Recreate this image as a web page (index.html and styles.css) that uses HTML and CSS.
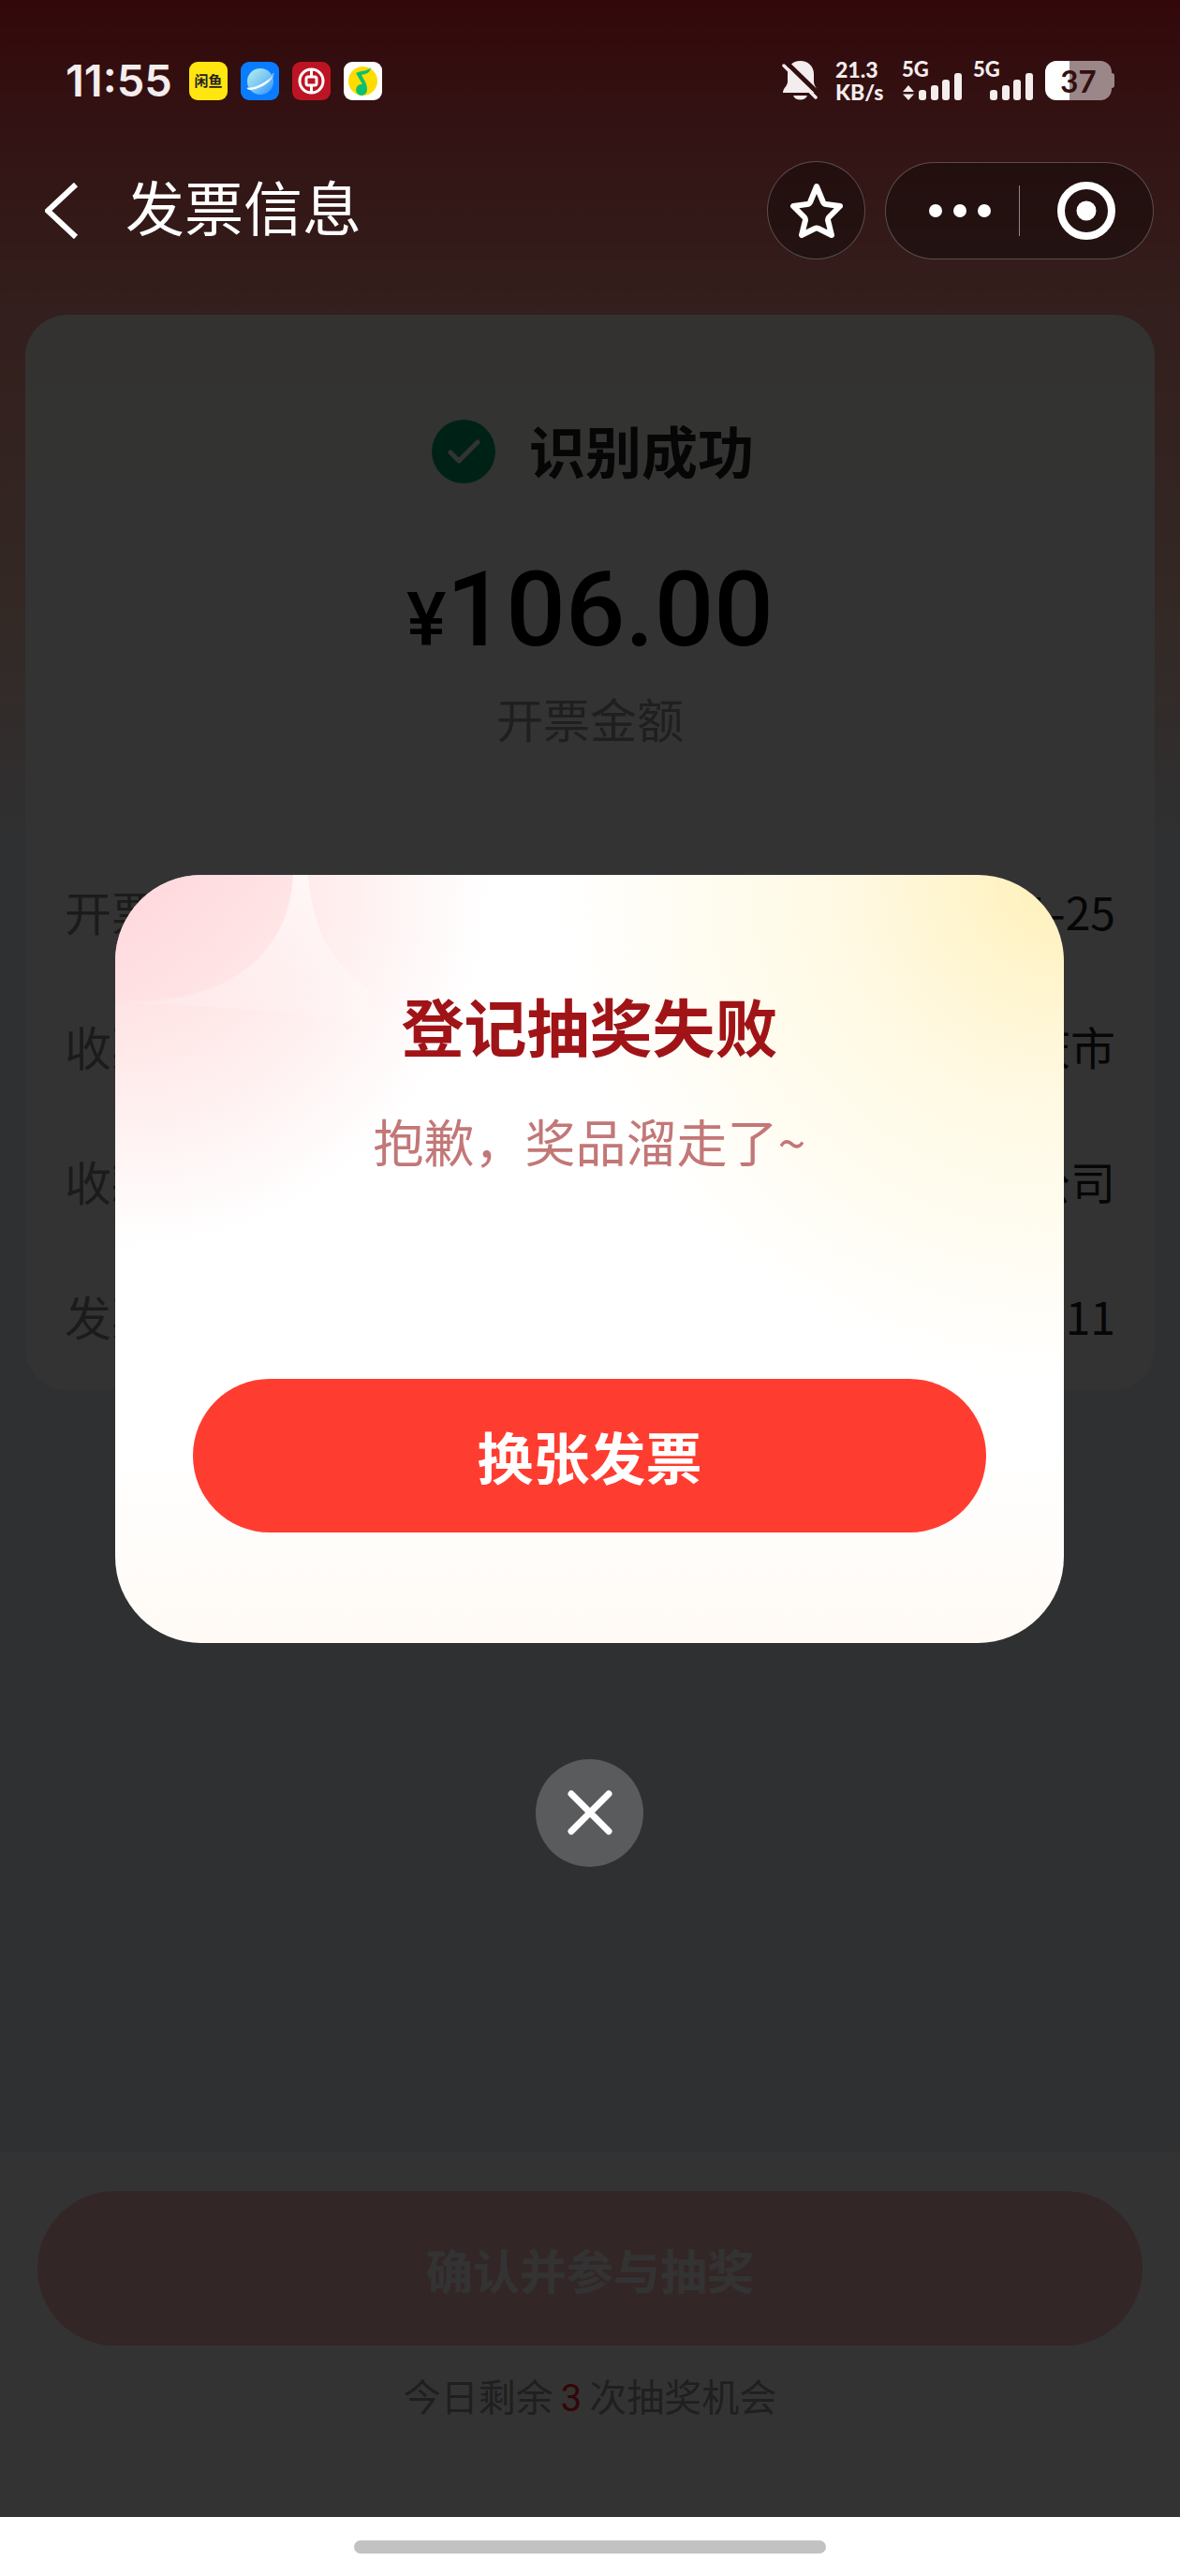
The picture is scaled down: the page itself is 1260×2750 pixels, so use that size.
FILE: index.html
```html
<!DOCTYPE html>
<html lang="zh-CN">
<head>
<meta charset="utf-8">
<meta name="viewport" content="width=device-width">
<title>发票信息</title>
<link rel="stylesheet" href="styles.css">
</head>
<body>
<div class="screen">
  <div class="app">
    <div class="status">
      <div class="status-left">
        <time class="clock">11:55</time>
        <span class="app-icon app-yellow">闲鱼</span>
        <svg class="app-icon" viewBox="0 0 41 41" aria-hidden="true">
          <defs>
            <linearGradient id="planet" x1="0" y1="0" x2="1" y2="1"><stop offset="0" stop-color="#b9f0ea"/><stop offset=".5" stop-color="#7cc8f5"/><stop offset="1" stop-color="#2a8dfb"/></linearGradient>
            <linearGradient id="ring" x1="0" y1="1" x2="1" y2="0"><stop offset="0" stop-color="#fff"/><stop offset=".6" stop-color="#fff"/><stop offset="1" stop-color="#6cb8ff"/></linearGradient>
          </defs>
          <rect width="41" height="41" fill="#0a7cff"/>
          <circle cx="21" cy="21" r="14" fill="url(#planet)"/>
          <path d="M7 28C8 33 35 24 35 12C33 20 14 30 7 28Z" fill="url(#ring)" stroke="url(#ring)"/>
        </svg>
        <svg class="app-icon" viewBox="0 0 41 41" aria-hidden="true">
          <rect width="41" height="41" fill="#bd1424"/>
          <g fill="none" stroke="#fff" stroke-width="3"><circle cx="20.500" cy="20.500" r="12.500"/><path d="M20.500 8v7M20.500 26v7"/><rect x="15" y="16" width="11" height="9" rx="2"/></g>
        </svg>
        <svg class="app-icon" viewBox="0 0 41 41" aria-hidden="true">
          <rect width="41" height="41" fill="#fff"/>
          <circle cx="20.500" cy="20.500" r="15.500" fill="#ffdc00"/>
          <path d="M29 6C26 10 20 9 13 12L20 24A6 6 0 1 0 25 29C25 23 21 18 19 14C24 13 28 12 29 6Z" fill="#0cc06f"/>
        </svg>
      </div>
      <div class="status-right">
        <svg class="bell" viewBox="0 0 39 42" aria-hidden="true">
          <path d="M19.500 0C11 0 6 6 6 14V22C6 27 1 29 1 34H38C38 29 34 27 34 22V14C34 6 28 0 19.500 0Z" fill="#f3eded"/>
          <path d="M12 37H27C25 43 14 43 12 37Z" fill="#f3eded"/>
          <path d="M5 2L40 36" stroke="#330e0f" stroke-width="5"/>
          <path d="M2 5L36 39" stroke="#f3eded" stroke-width="3.500" stroke-linecap="round"/>
        </svg>
        <span class="speed"><span>21.3</span><span>KB/s</span></span>
        <svg class="signal" viewBox="0 0 64 42" aria-hidden="true">
          <text x="-1" y="17">5G</text>
          <path d="M0 33L6 26L12 33ZM0 35.500L6 42L12 35.500Z"/>
          <rect x="17" y="31" width="8" height="11" rx="3"/><rect x="30" y="26" width="8" height="16" rx="3"/><rect x="42" y="20" width="8" height="22" rx="3"/><rect x="55" y="13" width="8" height="29" rx="3"/>
        </svg>
        <svg class="signal" viewBox="0 0 64 42" aria-hidden="true">
          <text x="-1" y="17">5G</text>
          <rect x="17" y="31" width="8" height="11" rx="3"/><rect x="30" y="26" width="8" height="16" rx="3"/><rect x="42" y="20" width="8" height="22" rx="3"/><rect x="55" y="13" width="8" height="29" rx="3"/>
        </svg>
        <span class="battery">37</span>
      </div>
    </div>

    <header class="nav">
      <button class="back" type="button" aria-label="返回">
        <svg viewBox="0 0 36 60"><path d="M33 2L3 30L33 58"/></svg>
      </button>
      <h1 class="nav-title">发票信息</h1>
      <button class="star" type="button" aria-label="收藏">
        <svg viewBox="0 0 60 60"><path d="M30 4L37 21Q38 23 40 23L55 25L43 37Q42 38 42 40L46 56L32 49Q30 48 28 49L14 56L18 40Q18 38 17 37L5 25L20 23Q22 23 23 21Z"/></svg>
      </button>
      <div class="capsule">
        <button type="button" aria-label="更多">
          <svg class="dots" viewBox="0 0 66 14"><circle cx="7" cy="7" r="7"/><circle cx="33" cy="7" r="7"/><circle cx="59" cy="7" r="7"/></svg>
        </button>
        <span class="divider"></span>
        <button type="button" aria-label="关闭">
          <svg class="target" viewBox="0 0 62 62"><circle cx="31" cy="31" r="27"/><circle class="target-dot" cx="31" cy="31" r="10.500"/></svg>
        </button>
      </div>
    </header>

    <main class="card">
      <div class="result">
        <svg class="check" viewBox="0 0 68 68" aria-hidden="true"><circle cx="34" cy="34" r="34"/><path d="M20 35L29 44L49 24"/></svg>
        <h2>识别成功</h2>
      </div>
      <p class="amount"><span class="yen">¥</span>106.00</p>
      <p class="caption">开票金额</p>
      <dl class="rows">
        <div class="row"><dt>开票日期</dt><dd>2025-11-25</dd></div>
        <div class="row"><dt>收票地区</dt><dd>重庆市</dd></div>
        <div class="row"><dt>收款方</dt><dd>有限公司</dd></div>
        <div class="row"><dt>发票号码</dt><dd>2711</dd></div>
      </dl>
    </main>

    <footer class="footer">
      <button class="confirm" type="button" disabled>确认并参与抽奖</button>
      <p class="note">今日剩余<b>3</b>次抽奖机会</p>
    </footer>

    <div class="overlay">
      <section class="dialog" role="dialog" aria-modal="true" aria-labelledby="dialog-title">
        <svg class="sparkle" viewBox="0 0 270 270" aria-hidden="true">
          <defs>
            <linearGradient id="glint" x1="0" y1="0" x2="1" y2="1"><stop offset="0" stop-color="#ffd8dd"/><stop offset="1" stop-color="#ffe6e4" stop-opacity=".2"/></linearGradient>
            <linearGradient id="beam" x1="0" y1="0" x2="0" y2="1"><stop offset="0" stop-color="#fff" stop-opacity=".6"/><stop offset="1" stop-color="#fff" stop-opacity=".1"/></linearGradient>
          </defs>
          <path d="M0 0H190C186 80 130 132 20 134L0 136Z" fill="url(#glint)"/>
          <path d="M190 0H206C212 60 228 90 270 122V160C220 150 120 140 20 137C130 132 186 80 190 0Z" fill="url(#beam)"/>
        </svg>
        <h2 id="dialog-title" class="dialog-title">登记抽奖失败</h2>
        <p class="dialog-text">抱歉，奖品溜走了~</p>
        <button class="primary" type="button">换张发票</button>
      </section>
      <button class="close" type="button" aria-label="关闭弹窗">
        <svg viewBox="0 0 48 48"><path d="M4 4L44 44M44 4L4 44"/></svg>
      </button>
    </div>
  </div>
  <div class="gesture"><span class="gesture-bar"></span></div>
</div>
</body>
</html>
```
FILE: styles.css
```css
* { box-sizing: border-box; }

body,
h1,
h2,
p,
dl,
dd { margin: 0; }

body {
  font-family: "Noto Sans CJK SC", sans-serif;
  background: #fff;
}

button {
  padding: 0;
  border: 0;
  background: none;
  font: inherit;
  color: inherit;
}

svg { display: block; }

.screen {
  display: flex;
  flex-direction: column;
  min-height: 100vh;
}

.app {
  position: relative;
  display: flex;
  flex: 1;
  flex-direction: column;
  background: linear-gradient(#ff2837 0, #ff6464 150px, #ff9b91 336px, #ffc8b4 640px, #ebf0f5 900px);
}

/* System status bar */
.status,
.nav {
  position: relative;
  z-index: 2;
  display: flex;
  align-items: center;
}

.status {
  justify-content: space-between;
  height: 172px;
  padding: 0 70px;
  color: #f3eded;
}

.status-left,
.status-right {
  display: flex;
  align-items: center;
}

.status-left { gap: 14px; }

.clock {
  width: 118px;
  font: 600 47px/48px Inter, sans-serif;
}

.app-icon {
  width: 41px;
  height: 41px;
  border-radius: 9px;
}

.app-yellow {
  background: #ffe60f;
  color: #222;
  font-size: 15px;
  font-weight: 700;
  line-height: 39px;
  text-align: center;
}

.bell {
  width: 39px;
  height: 42px;
  margin-right: 18px;
}

.speed {
  display: flex;
  flex-direction: column;
  width: 52px;
  margin-right: 20px;
  font: 900 23px/24px Lato, sans-serif;
}

.signal {
  width: 64px;
  height: 42px;
  margin-right: 12px;
  overflow: visible;
  fill: #f3eded;
  font: 900 22px Lato, sans-serif;
}

.battery {
  position: relative;
  width: 71px;
  height: 42px;
  margin-right: 3px;
  border-radius: 12px;
  background: linear-gradient(90deg, #fff 26px, #9b8787 26px);
  color: #330f10;
  font: 700 33px/42px Lato, sans-serif;
  text-align: center;
}

.battery::after {
  content: "";
  position: absolute;
  top: 13px;
  left: 71px;
  width: 3px;
  height: 16px;
  border-radius: 0 3px 3px 0;
  background: #9b8787;
}

/* Navigation bar */
.nav {
  height: 105px;
  padding: 0 28px 0 48px;
  color: #fff;
}

.back svg {
  width: 36px;
  height: 60px;
  fill: none;
  stroke: #fff;
  stroke-width: 6;
}

.nav-title {
  flex: 1;
  margin-left: 50px;
  padding-bottom: 12px;
  font-size: 63px;
  font-weight: 400;
  line-height: 90px;
}

.star,
.capsule {
  border: 1px solid rgba(255, 255, 255, .25);
  background: rgba(0, 0, 0, .3);
}

.star {
  display: grid;
  place-items: center;
  width: 105px;
  height: 105px;
  margin-right: 21px;
  border-radius: 50%;
}

.star svg {
  width: 60px;
  height: 60px;
  fill: none;
  stroke: #fff;
  stroke-width: 6;
  stroke-linejoin: round;
}

.capsule {
  display: flex;
  align-items: center;
  width: 287px;
  height: 104px;
  border-radius: 52px;
}

.capsule button {
  display: grid;
  flex: 1;
  place-items: center;
  height: 100%;
}

.divider {
  width: 1px;
  height: 54px;
  background: rgba(255, 255, 255, .5);
}

.dots {
  width: 66px;
  height: 14px;
  margin-left: 16px;
  fill: #fff;
}

.target {
  width: 62px;
  height: 62px;
  fill: none;
  stroke: #fff;
  stroke-width: 8;
}

.target-dot {
  fill: #fff;
  stroke: none;
}

/* Invoice card */
.card {
  margin: 59px 27px 0;
  padding: 112px 42px 8px;
  border-radius: 45px;
  background: linear-gradient(#fffaf0, #fff 240px);
}

.result {
  display: flex;
  align-items: center;
  justify-content: center;
  gap: 36px;
  padding-left: 6px;
}

.result h2 {
  padding-bottom: 4px;
  color: #222;
  font-size: 60px;
  line-height: 64px;
}

.check {
  width: 68px;
  height: 68px;
  fill: #00aa6e;
}

.check path {
  fill: none;
  stroke: #fff;
  stroke-width: 5;
  stroke-linecap: round;
  stroke-linejoin: round;
}

.amount {
  margin-top: 79px;
  color: #000;
  font: 500 112px/112px Roboto, sans-serif;
  text-align: center;
}

.yen {
  font-size: 80px;
}

.caption {
  margin-top: 18px;
  color: #999;
  font-size: 50px;
  line-height: 60px;
  text-align: center;
}

.rows { margin-top: 104px; }

.row {
  display: flex;
  justify-content: space-between;
  font-size: 50px;
  line-height: 144px;
}

.row dt { color: #888; }

.row dd {
  color: #222;
  font-size: 48px;
}

/* Bottom action area */
.footer {
  margin-top: auto;
  padding: 41px 40px 94px;
  background: #fff;
  text-align: center;
}

.confirm {
  width: 100%;
  height: 165px;
  border-radius: 83px;
  background: #ffbec3;
  color: #fff;
  font-size: 50px;
  font-weight: 700;
}

.note {
  margin-top: 21px;
  color: #999;
  font-size: 40px;
  line-height: 64px;
}

.note b {
  margin: 0 8px;
  color: #ff1e28;
  font-family: Roboto, sans-serif;
  font-weight: 400;
}

/* Result dialog */
.overlay {
  position: absolute;
  inset: 0;
  z-index: 1;
  display: grid;
  grid-template-rows: 1fr auto 1fr;
  justify-items: center;
  padding: 0 124px 0 123px;
  background: rgba(0, 0, 0, .8);
}

.dialog {
  position: relative;
  grid-row: 2;
  width: 100%;
  padding: 115px 83px 118px;
  overflow: hidden;
  border-radius: 92px;
  background:
    radial-gradient(circle at 100% 0, #fff0b9 0, #fff9e2 230px, rgba(255, 255, 255, 0) 540px),
    radial-gradient(circle at 0 0, #ffd7dc 0, #ffeaea 200px, rgba(255, 255, 255, 0) 400px),
    linear-gradient(#fff 75%, #fffaf5);
  text-align: center;
}

.sparkle {
  position: absolute;
  top: 0;
  left: 0;
  width: 270px;
  height: 270px;
}

.dialog-title {
  position: relative;
  color: #a01418;
  font-size: 67px;
  font-weight: 700;
  line-height: 90px;
}

.dialog-text {
  position: relative;
  margin-top: 43px;
  color: #c37777;
  font-size: 54px;
  line-height: 72px;
}

.primary {
  width: 100%;
  height: 164px;
  margin-top: 218px;
  border-radius: 82px;
  background: #ff3c30;
  color: #fff;
  font-size: 60px;
  font-weight: 700;
}

.close {
  display: grid;
  grid-row: 3;
  place-items: center;
  align-self: start;
  width: 115px;
  height: 115px;
  margin-top: 124px;
  border-radius: 50%;
  background: #5a5b5d;
}

.close svg {
  width: 48px;
  height: 48px;
  stroke: #fff;
  stroke-width: 7;
  stroke-linecap: round;
}

/* Gesture navigation strip */
.gesture {
  display: flex;
  align-items: center;
  justify-content: center;
  height: 63px;
}

.gesture-bar {
  width: 40%;
  height: 14px;
  border-radius: 7px;
  background: #c2c2c2;
}
```
